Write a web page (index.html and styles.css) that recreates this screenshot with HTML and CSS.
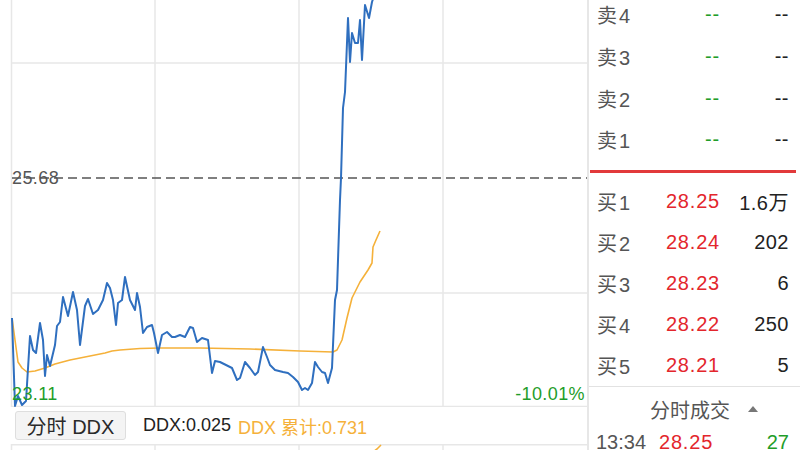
FILE: index.html
```
<!DOCTYPE html>
<html lang="zh-CN">
<head>
<meta charset="utf-8">
<title>分时 DDX</title>
<link rel="stylesheet" href="styles.css">
</head>
<body>
<div class="screen">
  <section class="left">
    <div class="chart">
      <svg class="chart-svg" width="587" height="407" viewBox="0 0 587 407">
        <g class="grid">
          <line x1="11.5" y1="0" x2="11.5" y2="407"/>
          <line x1="155" y1="0" x2="155" y2="407"/>
          <line x1="299" y1="0" x2="299" y2="407"/>
          <line x1="443" y1="0" x2="443" y2="407"/>
          <line x1="11" y1="63" x2="587" y2="63"/>
          <line x1="11" y1="293" x2="587" y2="293"/>
          <line x1="11" y1="406.5" x2="587" y2="406.5"/>
        </g>
        <line class="ref" x1="12" y1="178" x2="587" y2="178"/>
        <polyline class="avg" points="12,318 15,340 18,362 22,368 27,372 35,371 45,368 55,364 70,360 85,357 95,355 105,353 112,351 120,350 140,348.5 160,348 200,348 250,349 300,351 333,352 337,350 342,340 347,318 352,298 360,282 368,270 372,263 373,247 376,240 380,231"/>
        <polyline class="price" points="12,318 15,406 18,396 22,405 26,401 30,336 33,350 36,353 40,323 43,340 45,376 47,355 50,366 55,345 57,326 60,322 63,297 68,316 73,292 77,310 80,345 85,306 88,299 93,314 98,310 103,300 107,283 110,288 113,300 116,325 118,303 122,300 125,277 130,300 135,310 137,293 140,307 143,333 147,327 152,325 154,333 158,353 162,335 167,332 172,337 175,337 180,335 185,337 190,327 193,328 197,342 202,338 208,340 212,373 215,361 220,362 226,365 232,368 237,380 240,378 245,362 250,368 255,375 258,372 263,347 267,357 270,365 275,370 283,372 288,373 293,377 298,382 302,390 305,388 308,390 312,383 315,362 318,367 322,372 325,373 328,383 332,368 335,300 337,290 340,200 341,178 343,108 345,92 348,18 350,62 352,33 355,43 358,43 360,20 362,60 365,5 369,18 372,2 374,-4"/>
      </svg>
      <span class="lbl lbl-ref">25.68</span>
      <span class="lbl lbl-low">23.11</span>
      <span class="lbl lbl-pct">-10.01%</span>
    </div>
    <div class="ddx-bar">
      <button class="tab" type="button">分时 DDX</button>
      <span class="ddx">DDX:0.025</span>
      <span class="ddx-sum">DDX 累计:0.731</span>
    </div>
    <div class="sub-chart">
      <svg class="sub-svg" width="587" height="8" viewBox="0 0 587 8">
        <g class="grid">
          <line x1="11" y1="0.75" x2="587" y2="0.75"/>
          <line x1="11.5" y1="0" x2="11.5" y2="8"/>
          <line x1="155" y1="0" x2="155" y2="8"/>
          <line x1="299" y1="0" x2="299" y2="8"/>
          <line x1="443" y1="0" x2="443" y2="8"/>
        </g>
        <polyline class="avg" points="373,8 377,5 381,1"/>
      </svg>
    </div>
  </section>
  <aside class="book">
    <div class="sell">
      <div class="row"><span class="k">卖4</span><span class="p green">--</span><span class="v">--</span></div>
      <div class="row"><span class="k">卖3</span><span class="p green">--</span><span class="v">--</span></div>
      <div class="row"><span class="k">卖2</span><span class="p green">--</span><span class="v">--</span></div>
      <div class="row"><span class="k">卖1</span><span class="p green">--</span><span class="v">--</span></div>
    </div>
    <div class="split"></div>
    <div class="buy">
      <div class="row"><span class="k">买1</span><span class="p red">28.25</span><span class="v">1.6万</span></div>
      <div class="row"><span class="k">买2</span><span class="p red">28.24</span><span class="v">202</span></div>
      <div class="row"><span class="k">买3</span><span class="p red">28.23</span><span class="v">6</span></div>
      <div class="row"><span class="k">买4</span><span class="p red">28.22</span><span class="v">250</span></div>
      <div class="row"><span class="k">买5</span><span class="p red">28.21</span><span class="v">5</span></div>
    </div>
    <div class="trades-head"><span>分时成交</span><i class="caret"></i></div>
    <div class="trade"><span class="t">13:34</span><span class="tp red">28.25</span><span class="tv green">27</span></div>
  </aside>
</div>
</body>
</html>
```
FILE: styles.css
```
* { box-sizing: border-box; margin: 0; padding: 0; }
html, body { width: 800px; height: 450px; overflow: hidden; background: #fff; }
body { font-family: "Liberation Sans", "Noto Sans CJK SC", sans-serif; color: #222; }

.screen { display: flex; width: 800px; height: 450px; }

.left { width: 587px; flex: none; display: flex; flex-direction: column; }
.chart { position: relative; height: 407px; flex: none; }
.chart-svg, .sub-svg { display: block; }
.grid line { stroke: #e7e7e7; stroke-width: 1.5; }
.ref { stroke: #555; stroke-width: 1.3; stroke-dasharray: 9 5; }
.avg { fill: none; stroke: #f5b13a; stroke-width: 1.6; stroke-linejoin: round; }
.price { fill: none; stroke: #2f6fbf; stroke-width: 2; stroke-linejoin: round; }

.lbl { position: absolute; font-size: 18px; line-height: 20px; letter-spacing: 0.4px; }
.lbl-ref { left: 12px; top: 168px; color: #555; }
.lbl-low { left: 12px; top: 384px; color: #1f9d2a; }
.lbl-pct { right: 2px; top: 384px; color: #1f9d2a; }

.ddx-bar { height: 37px; flex: none; display: flex; align-items: center; padding-left: 15px; font-size: 18px; }
.tab { height: 29px; width: 111px; border: 1px solid #dedede; border-radius: 3px; background: #f4f4f4; font: inherit; font-size: 20px; color: #2a2a2a; display: flex; align-items: center; justify-content: center; }
.ddx { margin-left: 17px; color: #222; }
.ddx-sum { margin-left: 7px; color: #f5b13a; }

.sub-chart { flex: 1; overflow: hidden; }

.book { flex: 1; border-left: 2px solid #e7e7e7; display: flex; flex-direction: column; overflow: hidden; font-size: 20px; }
.row { display: grid; grid-template-columns: 50px 73px 1fr; align-items: center; padding: 0 11px 0 8px; }
.sell { margin-top: -6px; }
.sell .row { height: 41.67px; }
.buy .row { height: 41px; }
.k { color: #555; letter-spacing: 2px; }
.p { text-align: right; letter-spacing: 0.8px; }
.v { text-align: right; color: #222; letter-spacing: 0.5px; }
.red { color: #e3262c; }
.green { color: #1f9d2a; }
.split { height: 3px; background: #e2393b; margin: 9px 4px 8.5px 1px; flex: none; }

.trades-head { border-top: 1px solid #e2e2e2; height: 45px; flex: none; display: flex; align-items: center; padding-left: 61px; color: #555; }
.caret { width: 0; height: 0; border-left: 5px solid transparent; border-right: 5px solid transparent; border-bottom: 6px solid #777; margin-left: 18px; }

.trade { display: grid; grid-template-columns: 63px auto 1fr; align-items: center; height: 24px; padding: 0 11px 0 7px; }
.t { color: #555; }
.tp { letter-spacing: 0.8px; }
.tv { text-align: right; }
```
